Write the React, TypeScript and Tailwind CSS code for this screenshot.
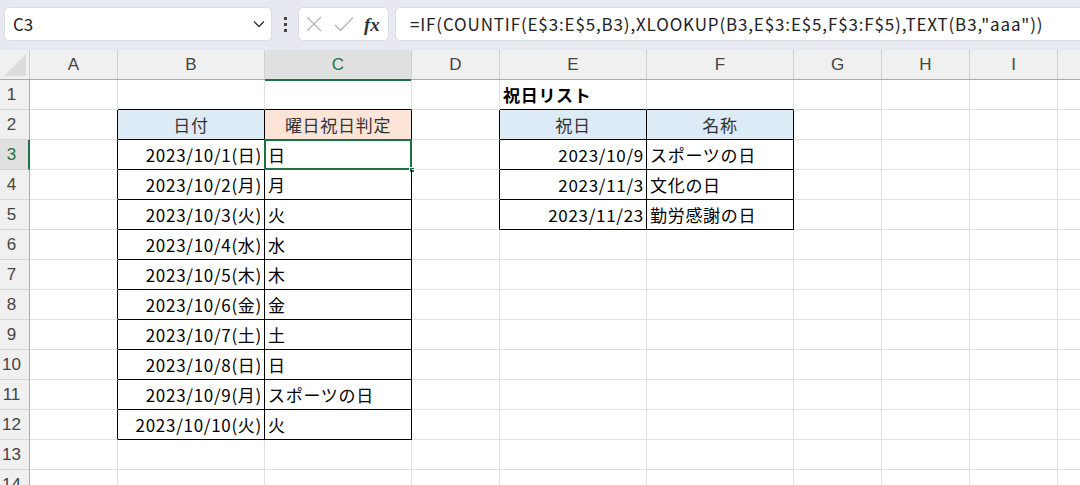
import React from 'react'

const cols = ['A', 'B', 'C', 'D', 'E', 'F', 'G', 'H', 'I', 'J']
const widths = [88, 147, 147, 88, 147, 147, 88, 88, 88, 88]

type Cell = { text?: string; align?: 'left' | 'right' | 'center'; bg?: string; bold?: boolean }

const days = ['日', '月', '火', '水', '木', '金', '土', '日', '月', '火']
const judge = ['日', '月', '火', '水', '木', '金', '土', '日', 'スポーツの日', '火']

const data: Record<string, Cell> = {
  E1: { text: '祝日リスト', bold: true },
  B2: { text: '日付', align: 'center', bg: 'blue' },
  C2: { text: '曜日祝日判定', align: 'center', bg: 'orange' },
  E2: { text: '祝日', align: 'center', bg: 'blue' },
  F2: { text: '名称', align: 'center', bg: 'blue' },
  E3: { text: '2023/10/9', align: 'right' },
  F3: { text: 'スポーツの日' },
  E4: { text: '2023/11/3', align: 'right' },
  F4: { text: '文化の日' },
  E5: { text: '2023/11/23', align: 'right' },
  F5: { text: '勤労感謝の日' },
}
days.forEach((d, i) => {
  data['B' + (i + 3)] = { text: `2023/10/${i + 1}(${d})`, align: 'right' }
  data['C' + (i + 3)] = { text: judge[i] }
})

// black-bordered ranges: [row1, row2, col1, col2] (col index A=0)
const ranges = [
  [2, 12, 1, 2],
  [2, 5, 4, 5],
]
const inTable = (r: number, c: number) =>
  ranges.some(([r1, r2, c1, c2]) => r >= r1 && r <= r2 && c >= c1 && c <= c2)

const rows = Array.from({ length: 14 }, (_, i) => i + 1)

const App = () => {
  return (
    <div className="w-[1080px] h-[485px] overflow-hidden bg-white text-black" style={{ fontFamily: '"Noto Sans CJK JP", "Liberation Sans", sans-serif' }}>
      {/* formula bar */}
      <div className="h-[50px] bg-[#e6e9ef] flex items-start pt-[7px] pl-[4px] gap-0">
        <div className="w-[268px] shrink-0 h-[34px] bg-white rounded-[5px] border border-[#d9dce1] flex items-center justify-between pl-[8px] pr-[6px]">
          <span className="text-[17px] text-[#222]">C3</span>
          <svg width="12" height="8" viewBox="0 0 12 8" fill="none" stroke="#333" strokeWidth="1.3">
            <path d="M1 1.5 L6 6.5 L11 1.5" />
          </svg>
        </div>
        <div className="w-[26px] shrink-0 h-[34px] flex flex-col items-center justify-center gap-[3px]">
          <span className="w-[3px] h-[3px] bg-[#444]" />
          <span className="w-[3px] h-[3px] bg-[#444]" />
          <span className="w-[3px] h-[3px] bg-[#444]" />
        </div>
        <div className="w-[91px] shrink-0 h-[34px] bg-white rounded-[5px] border border-[#d9dce1] flex items-center pl-[7px] gap-[12px]">
          <svg width="16" height="16" viewBox="0 0 16 16" stroke="#b5b5b5" strokeWidth="1.3">
            <path d="M1 1 L15 15 M15 1 L1 15" />
          </svg>
          <svg width="20" height="16" viewBox="0 0 20 16" fill="none" stroke="#b5b5b5" strokeWidth="1.3">
            <path d="M1 9 L6.5 14.5 L19 1.5" />
          </svg>
          <span className="text-[19px] italic font-bold text-[#333] leading-none -ml-[2px]" style={{ fontFamily: '"Liberation Serif", serif' }}>fx</span>
        </div>
        <div className="ml-[6px] flex-1 h-[34px] bg-white rounded-l-[5px] border border-r-0 border-[#d9dce1] flex items-center pl-[14px] overflow-hidden">
          <span className="text-[17px] text-[#222] whitespace-nowrap tracking-[0.85px]">
            =IF(COUNTIF(E$3:E$5,B3),XLOOKUP(B3,E$3:E$5,F$3:F$5),TEXT(B3,"aaa"))
          </span>
        </div>
      </div>

      {/* column headers */}
      <div className="flex h-[30px] bg-[#f0f0f0] border-b border-[#ababab]">
        <div className="w-[30px] shrink-0 h-full border-r border-[#d0d0d0] relative">
          <div className="absolute right-[3px] bottom-[3px] w-0 h-0 border-l-[22px] border-l-transparent border-b-[22px] border-b-[#dcdcdc]" />
        </div>
        {cols.map((c, i) => (
          <div
            key={c}
            className={
              c === 'C'
                ? 'shrink-0 h-[31px] -mb-px bg-[#e0e0e0] border-r border-[#d0d0d0] border-b-2 border-b-[#1e7145] flex items-center justify-center text-[17px] text-[#1e7145]'
                : 'shrink-0 h-full border-r border-[#d0d0d0] flex items-center justify-center text-[17px] text-[#444]'
            }
            style={{ width: widths[i], fontFamily: '"Liberation Sans Narrow", "Liberation Sans", sans-serif' }}
          >
            {c}
          </div>
        ))}
      </div>

      {/* rows */}
      {rows.map((r) => (
        <div key={r} className="flex h-[30px]">
          <div
            className={
              r === 3
                ? 'w-[30px] shrink-0 h-full bg-[#e0e0e0] border-r-2 border-[#1e7145] border-b border-b-[#d4d4d4] flex items-center justify-center pr-[5px] text-[17px] text-[#1e7145]'
                : 'w-[30px] shrink-0 h-full bg-[#f0f0f0] border-r border-[#ababab] border-b border-b-[#d4d4d4] flex items-center justify-center pr-[6px] text-[17px] text-[#444]'
            }
            style={{ fontFamily: '"Liberation Sans Narrow", "Liberation Sans", sans-serif' }}
          >
            {r}
          </div>
          {cols.map((c, ci) => {
            const cell = data[c + r] || {}
            const right = inTable(r, ci) || inTable(r, ci + 1)
            const bottom = inTable(r, ci) || inTable(r + 1, ci)
            const selected = c === 'C' && r === 3
            return (
              <div
                key={c}
                className={[
                  'relative shrink-0 h-full flex items-center overflow-visible whitespace-nowrap text-[17px] tracking-[0.7px]',
                  right ? 'border-r border-r-black' : 'border-r border-r-[#e1e1e1]',
                  bottom ? 'border-b border-b-black' : 'border-b border-b-[#e1e1e1]',
                  cell.bg === 'blue' ? 'bg-[#ddebf7]' : cell.bg === 'orange' ? 'bg-[#fce4d6]' : '',
                  cell.align === 'right' ? 'justify-end pr-[2px]' : cell.align === 'center' ? 'justify-center text-[#333]' : 'justify-start pl-[3px]',
                  cell.bold ? 'font-bold' : '',
                ].join(' ')}
                style={{ width: widths[ci] }}
              >
                {cell.text}
                {selected && (
                  <>
                    <div className="absolute -left-px -top-px w-[148px] h-[31px] border-2 border-[#1e7145] pointer-events-none" />
                    <div className="absolute -right-[4px] -bottom-[4px] w-[6px] h-[6px] bg-[#1e7145] border border-white" />
                  </>
                )}
              </div>
            )
          })}
        </div>
      ))}
    </div>
  )
}

export default App
